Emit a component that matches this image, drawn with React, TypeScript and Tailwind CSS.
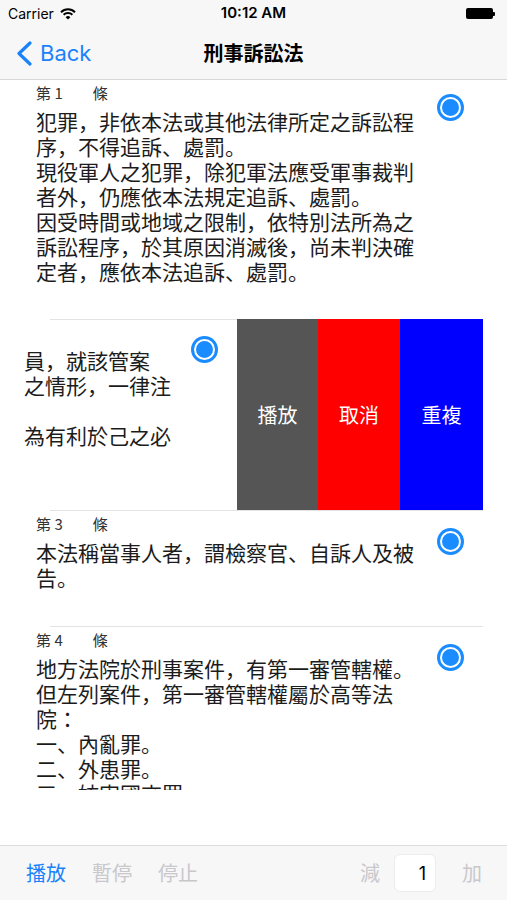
const cjk = "font-['Noto_Sans_CJK_JP','Noto_Sans_CJK_TC',sans-serif]";
const ui = "font-['Inter','Noto_Sans_CJK_TC',sans-serif]";

function Dot() {
  return (
    <div className="flex h-[27px] w-[27px] shrink-0 items-center justify-center rounded-full bg-[#1a8cff]">
      <div className="h-[21px] w-[21px] rounded-full border-2 border-white bg-[#1a8cff]" />
    </div>
  );
}

function Label({ no }: { no: number }) {
  return (
    <div className="flex h-[20px] items-center text-[15px] leading-[20px] text-[#333]">
      <span>第 {no}</span>
      <span className="ml-[30px]">條</span>
    </div>
  );
}

function Article({ no, paras, dotTop }: { no: number; paras: string[]; dotTop: string }) {
  return (
    <div className="flex pl-[36px] pt-[3px]">
      <div className="w-[384px]">
        <Label no={no} />
        <div className="mt-[6px] text-[21px] leading-[25px] text-[#1c1c1c]">
          {paras.map((p) => (
            <p key={p}>{p}</p>
          ))}
        </div>
      </div>
      <div className={`ml-[17px] ${dotTop}`}>
        <Dot />
      </div>
    </div>
  );
}

function Separator() {
  return <div className="ml-[50px] mr-[24px] h-px shrink-0 bg-[#e3e3e3]" />;
}

export default function App() {
  return (
    <div className={`flex h-[900px] w-[507px] flex-col overflow-hidden bg-white ${cjk}`}>
      {/* status bar */}
      <div className={`grid h-[27px] grid-cols-3 items-center bg-[#f7f7f7] px-[8px] text-black ${ui}`}>
        <div className="flex items-center gap-[6px] text-[14px]">
          <span>Carrier</span>
          <svg width="16" height="12" viewBox="0 0 16 12">
            <path d="M1 4.2 A10 10 0 0 1 15 4.2" fill="none" stroke="black" strokeWidth="2" />
            <path d="M3.6 6.8 A6.4 6.4 0 0 1 12.4 6.8" fill="none" stroke="black" strokeWidth="2" />
            <path d="M8 11.5 L5.6 9.2 A3.4 3.4 0 0 1 10.4 9.2 Z" fill="black" />
          </svg>
        </div>
        <div className="text-center text-[15px] font-semibold">10:12 AM</div>
        <div className="flex items-center justify-end pr-[4px]">
          <div className="h-[11px] w-[27px] rounded-[2px] bg-black" />
          <div className="h-[4px] w-[2px] rounded-r-[1px] bg-black" />
        </div>
      </div>

      {/* nav bar */}
      <div className="grid h-[53px] grid-cols-[1fr_auto_1fr] items-center border-b border-[#d8d8d8] bg-[#f7f7f7]">
        <div className={`flex items-center pl-[16px] text-[#1a82fb] ${ui}`}>
          <svg width="16" height="25" viewBox="0 0 16 25">
            <polyline points="14,2 3,12.5 14,23" fill="none" stroke="#1a82fb" strokeWidth="3.2" strokeLinecap="round" strokeLinejoin="round" />
          </svg>
          <span className="ml-[8px] text-[22px]">Back</span>
        </div>
        <div className="text-[20px] font-semibold text-black">刑事訴訟法</div>
        <div />
      </div>

      {/* list */}
      <div className="flex h-[710px] flex-col overflow-hidden">
        <div className="h-[239px] shrink-0">
          <Article
            no={1}
            dotTop="mt-[11px]"
            paras={[
              "犯罪，非依本法或其他法律所定之訴訟程序，不得追訴、處罰。",
              "現役軍人之犯罪，除犯軍法應受軍事裁判者外，仍應依本法規定追訴、處罰。",
              "因受時間或地域之限制，依特別法所為之訴訟程序，於其原因消滅後，尚未判決確定者，應依本法追訴、處罰。",
            ]}
          />
        </div>

        {/* swiped row */}
        <div className="flex h-[191px] shrink-0">
          <div className="flex w-[237px] flex-col">
            <div className="ml-[50px] h-px bg-[#e3e3e3]" />
            <div className="flex pl-[24px] pt-[2px]">
              <div className="w-[167px] whitespace-nowrap">
                <div className="h-[20px]" />
                <div className="mt-[6px] text-[21px] leading-[25px] text-[#1c1c1c]">
                  <p>員，就該管案</p>
                  <p>之情形，一律注</p>
                  <p>&nbsp;</p>
                  <p>為有利於己之必</p>
                </div>
              </div>
              <div className="mt-[14px]">
                <Dot />
              </div>
            </div>
          </div>
          <div className="flex w-[81px] items-center justify-center bg-[#555555] text-[20px] text-white">播放</div>
          <div className="flex w-[82px] items-center justify-center bg-[#ff0000] text-[20px] text-white">取消</div>
          <div className="flex w-[83px] items-center justify-center bg-[#0000ff] text-[20px] text-white">重複</div>
        </div>

        <Separator />
        <div className="h-[115px] shrink-0">
          <Article no={3} dotTop="mt-[14px]" paras={["本法稱當事人者，謂檢察官、自訴人及被告。"]} />
        </div>

        <Separator />
        <div className="shrink-0">
          <Article
            no={4}
            dotTop="mt-[14px]"
            paras={[
              "地方法院於刑事案件，有第一審管轄權。",
              "但左列案件，第一審管轄權屬於高等法院：",
              "一、內亂罪。",
              "二、外患罪。",
              "三、妨害國交罪。",
            ]}
          />
        </div>
      </div>

      <div className="h-[55px] shrink-0" />

      {/* toolbar */}
      <div className="flex h-[55px] shrink-0 items-center border-t border-[#dedede] bg-[#f7f7f7] pl-[26px] pr-[25px] text-[20px]">
        <span className="text-[#1a82fb]">播放</span>
        <span className="ml-[26px] text-[#c8c8cc]">暫停</span>
        <span className="ml-[26px] text-[#c8c8cc]">停止</span>
        <div className="flex-1" />
        <span className="text-[#c8c8cc]">減</span>
        <div className={`ml-[14px] flex h-[38px] w-[42px] items-center justify-end rounded-[6px] border border-[#ececec] bg-white pr-[9px] text-[18px] text-black ${ui}`}>
          1
        </div>
        <span className="ml-[26px] text-[#c8c8cc]">加</span>
      </div>
    </div>
  );
}
